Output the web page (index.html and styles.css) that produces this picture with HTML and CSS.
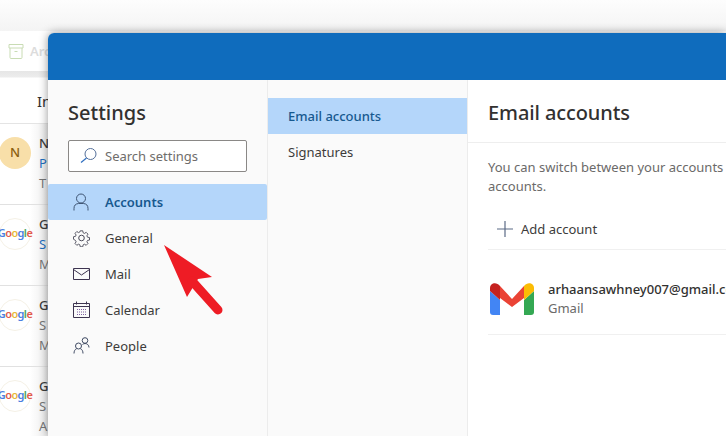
FILE: index.html
```html
<!DOCTYPE html>
<html lang="en">
<head>
<meta charset="utf-8">
<title>Settings</title>
<link rel="stylesheet" href="styles.css">
</head>
<body>
<div class="app">
  <div class="topband"></div>
  <div class="ribbon">
    <svg class="archive" width="16" height="15" viewBox="0 0 16 15"><path d="M1 .5h14v3.5H1zM2 4v9.500a1 1 0 0 0 1 1h10a1 1 0 0 0 1-1V4M6.500 7.500h3" fill="none" stroke="#c9dcb4" stroke-width="1"/></svg>
    <span class="archive-label">Arc</span>
  </div>
  <div class="inbox-head"><span>In</span></div>
  <div class="mail">
    <div class="avatar avatar-n">N</div>
    <div class="mail-text"><b>N</b><span class="blue">P</span><span>T</span></div>
  </div>
  <div class="mail">
    <div class="avatar avatar-g"><span class="gl"><i class="c1">G</i><i class="c2">o</i><i class="c3">o</i><i class="c1">g</i><i class="c4">l</i><i class="c2">e</i></span></div>
    <div class="mail-text"><b>G</b><span class="blue">S</span><span>M</span></div>
  </div>
  <div class="mail">
    <div class="avatar avatar-g"><span class="gl"><i class="c1">G</i><i class="c2">o</i><i class="c3">o</i><i class="c1">g</i><i class="c4">l</i><i class="c2">e</i></span></div>
    <div class="mail-text"><b>G</b><span>S</span><span>M</span></div>
  </div>
  <div class="mail">
    <div class="avatar avatar-g"><span class="gl"><i class="c1">G</i><i class="c2">o</i><i class="c3">o</i><i class="c1">g</i><i class="c4">l</i><i class="c2">e</i></span></div>
    <div class="mail-text"><b>G</b><span>S</span><span>A</span></div>
  </div>
</div>

<div class="dialog">
  <div class="dialog-bar"></div>
  <div class="dialog-body">
    <nav class="pane-nav">
      <h1>Settings</h1>
      <div class="search">
        <svg width="18" height="18" viewBox="0 0 18 18"><circle cx="10.500" cy="7" r="5.500" fill="none" stroke="#55709a" stroke-width="1"/><path d="M6.500 11 1 15.500" stroke="#2f6fc0" stroke-width="1.200" fill="none"/></svg>
        <span>Search settings</span>
      </div>
      <ul class="nav-list">
        <li class="nav-item active">
          <svg width="18" height="18" viewBox="0 0 18 18" fill="none" stroke="#3f5573"><circle cx="8" cy="5.500" r="4.500"/><path d="M1 17.500v-2a5 5 0 0 1 4.500-5h5a5 5 0 0 1 4.500 5v2"/></svg>
          <span>Accounts</span>
        </li>
        <li class="nav-item">
          <svg width="18" height="18" viewBox="0 0 18 18" fill="none" stroke="#4a4a58"><circle cx="8.500" cy="9" r="2.800"/><path d="M7.600 1h2.800l.4 2.200 1.500.7 1.900-1.200 2 2-1.200 1.900.7 1.500 2.200.4v2.800l-2.200.4-.7 1.500 1.200 1.900-2 2-1.900-1.200-1.500.7-.4 2.200H7.600l-.4-2.200-1.500-.7-1.900 1.200-2-2 1.200-1.900-.7-1.500L.1 10.400V7.600l2.200-.4.7-1.500-1.200-1.900 2-2 1.900 1.200 1.500-.7z" transform="translate(.4 .9) scale(.9)"/></svg>
          <span>General</span>
        </li>
        <li class="nav-item">
          <svg width="18" height="18" viewBox="0 0 18 18" fill="none" stroke="#3d3450"><path d="M.5 3.500h16v11H.5zM.5 4.500 8.500 10l8-5.500"/></svg>
          <span>Mail</span>
        </li>
        <li class="nav-item">
          <svg width="18" height="18" viewBox="0 0 18 18" fill="none" stroke="#3d3450"><path d="M.5 2.500h16v14H.5zM.5 5.500h16M3.500 .5v3M13.500 .5v3"/><path d="M4 8.500h9M4 11h9M4 13.500h9" stroke="#7d5fa0" stroke-dasharray="1 1"/></svg>
          <span>Calendar</span>
        </li>
        <li class="nav-item">
          <svg width="18" height="18" viewBox="0 0 18 18" fill="none" stroke="#3f4a63"><circle cx="12" cy="3.500" r="2.800"/><circle cx="5.500" cy="9" r="3"/><path d="M1 16.500c0-2.500 1-4.200 2.500-4.700M7.500 11.800c1.500.5 2.500 2.200 2.500 4.700M9.500 7.500c.7-.5 1.500-1 2.500-1 2 0 4 1.500 4 4"/></svg>
          <span>People</span>
        </li>
      </ul>
    </nav>
    <div class="pane-sub">
      <div class="sub-item selected">Email accounts</div>
      <div class="sub-item">Signatures</div>
    </div>
    <main class="pane-main">
      <h2>Email accounts</h2>
      <div class="main-content">
        <p class="intro">You can switch between your accounts in Outlook by adding your other<br>accounts.</p>
        <div class="add-row">
          <svg width="16" height="16" viewBox="0 0 16 16"><path d="M8 0v16M0 8h16" stroke="#5b6a85" stroke-width="1.200"/></svg>
          <span>Add account</span>
        </div>
        <div class="account-row">
          <svg class="gmail" width="44" height="32" viewBox="0 0 44 32">
            <path d="M0 8v21a3 3 0 0 0 3 3h7V17z" fill="#4285f4"/>
            <path d="M34 17v15h7a3 3 0 0 0 3-3V8z" fill="#34a853"/>
            <path d="M34 3v14l10-9V5c0-4.500-6-7-10-2z" fill="#fbbc04"/>
            <path d="M10 3l12 13 12-13v12l-12 9-12-9z" fill="#ea4335"/>
            <path d="M0 8l10 9V3C6-2 0 .5 0 5z" fill="#c5221f"/>
          </svg>
          <div class="account-text">
            <strong>arhaansawhney007@gmail.com</strong>
            <span>Gmail</span>
          </div>
        </div>
      </div>
    </main>
  </div>
</div>

<svg class="arrow" width="62" height="76" viewBox="0 0 62 76"><path d="M0 0 48 32 34 34 23 52z" fill="#ee1c25"/><path d="M28 36 54 65" stroke="#ee1c25" stroke-width="9" stroke-linecap="round" fill="none"/></svg>
</body>
</html>
```

FILE: styles.css
```css
* { box-sizing: border-box; }
html, body { margin: 0; height: 100%; }
body {
  position: relative;
  overflow: hidden;
  width: 726px;
  height: 436px;
  background: #fff;
  font-family: "Noto Sans", "Open Sans", sans-serif;
  color: #323130;
}
.app { display: flex; flex-direction: column; height: 436px; overflow: hidden; }
.topband {
  flex: none;
  height: 31px;
  background: linear-gradient(#fdfdfd, #f4f4f4);
}
.ribbon {
  flex: none;
  height: 40px;
  background: #fff;
  display: flex;
  align-items: center;
  gap: 6px;
  padding-left: 8px;
}
.archive { flex: none; }
.archive-label { font-size: 13px; color: #dcdcdc; font-weight: 600; }
.inbox-head {
  flex: none;
  height: 53px;
  padding: 20px 0 0 37px;
  font-size: 15px;
  line-height: 20px;
  background: linear-gradient(#e6e6e6, #ececec 6px, #fff 7px);
  border-bottom: 1px solid #e4e4e4;
}
.mail {
  flex: none;
  height: 81px;
  display: flex;
  gap: 8px;
  padding: 9px 0 0 0;
  border-bottom: 1px solid #e1e1e1;
  background: linear-gradient(90deg, #fff 30px, #ececec 48px);
}
.mail:last-child { flex: 1 1 0; border-bottom: 0; }
.avatar {
  flex: none;
  width: 32px;
  height: 32px;
  margin: 4px 0 0 -1px;
  border-radius: 50%;
  display: flex;
  align-items: center;
  justify-content: center;
}
.avatar-n { background: #f8dfa9; color: #8a6110; font-size: 13px; font-weight: 500; padding-bottom: 2px; }
.avatar-g { background: #fff; border: 1px solid #f5f1e6; padding-bottom: 4px; }
.gl { font: 600 11px/1 "Noto Sans", sans-serif; letter-spacing: -.6px; }
.gl i { font-style: normal; }
.c1 { color: #4b7fe0; }
.c2 { color: #e25a4d; }
.c3 { color: #e8b93a; }
.c4 { color: #4aa563; }
.mail-text {
  display: flex;
  flex-direction: column;
  font-size: 13px;
  line-height: 20px;
  color: #777;
}
.mail-text b { font-weight: 500; color: #3d3d3d; }
.blue { color: #1f6fc0; }

.dialog {
  position: absolute;
  left: 48px;
  top: 33px;
  width: 678px;
  height: 403px;
  border-radius: 6px 0 0 0;
  background: #fff;
  overflow: hidden;
  display: flex;
  flex-direction: column;
  box-shadow: 0 0 10px rgba(0,0,0,.42);
}
.dialog-bar { height: 47px; background: #0f6cbd; flex: none; }
.dialog-body { flex: 1; display: flex; min-height: 0; }
.pane-nav {
  width: 220px;
  flex: none;
  background: #fafafa;
  border-right: 1px solid #ececec;
}
.pane-nav h1 {
  margin: 19px 0 0 20px;
  font-size: 20px;
  line-height: 28px;
  font-weight: 500;
  color: #323130;
}
.search {
  margin: 13px 0 0 20px;
  width: 179px;
  height: 32px;
  background: #fff;
  border: 1px solid #8a8886;
  border-radius: 2px;
  display: flex;
  align-items: center;
  gap: 7px;
  padding-left: 11px;
  font-size: 13px;
  color: #6f6d6b;
}
.nav-list { list-style: none; margin: 12px 0 0; padding: 0; }
.nav-item {
  height: 36px;
  width: 219px;
  display: flex;
  align-items: center;
  gap: 14px;
  padding-left: 25px;
  font-size: 13px;
  color: #3d3c3b;
  border-radius: 2px;
}
.nav-item.active { background: #b4d6fa; color: #17598f; font-weight: 600; }
.pane-sub {
  width: 200px;
  flex: none;
  background: #fafafa;
  border-right: 1px solid #ececec;
  padding-top: 18px;
}
.sub-item {
  height: 36px;
  padding-left: 20px;
  display: flex;
  align-items: center;
  font-size: 13px;
  color: #3d3c3b;
}
.sub-item.selected { background: #b4d6fa; color: #17598f; font-weight: 500; }
.pane-main { flex: 1; min-width: 0; background: #fff; }
.pane-main h2 {
  margin: 0;
  padding: 17px 0 0 20px;
  height: 63px;
  font-size: 20px;
  line-height: 32px;
  font-weight: 500;
  letter-spacing: -.1px;
  border-bottom: 1px solid #eeeeee;
  white-space: nowrap;
}
.main-content { padding-left: 20px; }
.intro {
  margin: 15px 0 0;
  font-size: 13px;
  line-height: 19px;
  color: #6b6a69;
  white-space: nowrap;
}
.add-row {
  height: 40px;
  margin-top: 14px;
  display: flex;
  align-items: center;
  gap: 8px;
  padding: 0 0 1px 9px;
  font-size: 13px;
  color: #3d3c3b;
  border-bottom: 1px solid #f0f0f0;
}
.account-row {
  height: 85px;
  display: flex;
  align-items: center;
  gap: 14px;
  padding: 13px 0 0 2px;
  border-bottom: 1px solid #f0f0f0;
  white-space: nowrap;
}
.gmail { flex: none; }
.account-text { display: flex; flex-direction: column; font-size: 13px; line-height: 19px; color: #6b6a69; }
.account-text strong { font-weight: 500; color: #323130; }
.arrow { position: absolute; left: 164px; top: 245px; }
```
